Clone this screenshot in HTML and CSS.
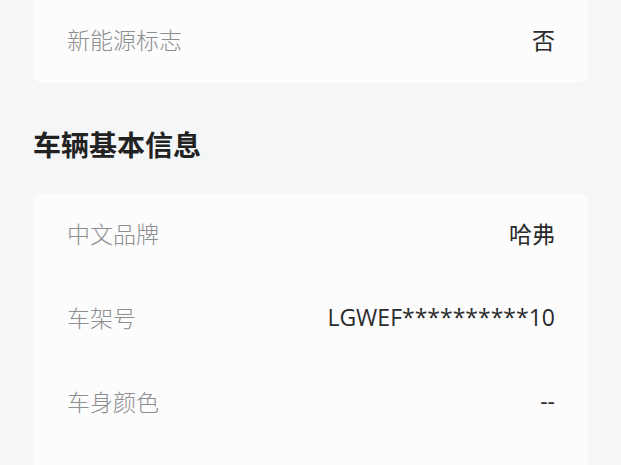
FILE: index.html
```html
<!DOCTYPE html>
<html lang="zh-CN">
<head>
    <meta charset="UTF-8">
    <meta name="viewport" content="width=device-width, initial-scale=1.0">
    <title>车辆信息</title>
    <link rel="stylesheet" href="styles.css">
</head>
<body>

    <!-- 上一个分组的最后一行 -->
    <div class="card card-top">
        <div class="row">
            <span class="label">新能源标志</span>
            <span class="value">否</span>
        </div>
    </div>

    <h2 class="section-title">车辆基本信息</h2>

    <div class="card card-open">
        <div class="row">
            <span class="label">中文品牌</span>
            <span class="value">哈弗</span>
        </div>
        <div class="row">
            <span class="label">车架号</span>
            <span class="value">LGWEF**********10</span>
        </div>
        <div class="row">
            <span class="label">车身颜色</span>
            <span class="value">--</span>
        </div>
    </div>

</body>
</html>
```

FILE: styles.css
```css
/* 页面基础样式 */
body {
    margin: 0;
    padding: 0 33px;
    background: #f5f6f8;
    font-family: "Open Sans", "Noto Sans CJK SC", sans-serif;
    overflow: hidden;
}
.card {
    background: #fcfcfd;
    border-radius: 10px;
    padding: 0 33px 0 34px;
}
.card-top {
    margin-top: -1px;
    border-radius: 0 0 10px 10px;
}
.card-open {
    padding-bottom: 40px;
    border-radius: 10px 10px 0 0;
}
.row {
    display: flex;
    justify-content: space-between;
    align-items: center;
    box-sizing: border-box;
    height: 84px;
    padding-bottom: 4px;
    font-size: 23px;
}
.label {
    color: #8d8e90;
    font-weight: 300;
}
.value {
    color: #2a2a2a;
}
.section-title {
    margin: 0;
    padding: 43px 0 0;
    height: 67px;
    font-size: 28px;
    font-weight: bold;
    color: #222;
    line-height: 38px;
}
```
